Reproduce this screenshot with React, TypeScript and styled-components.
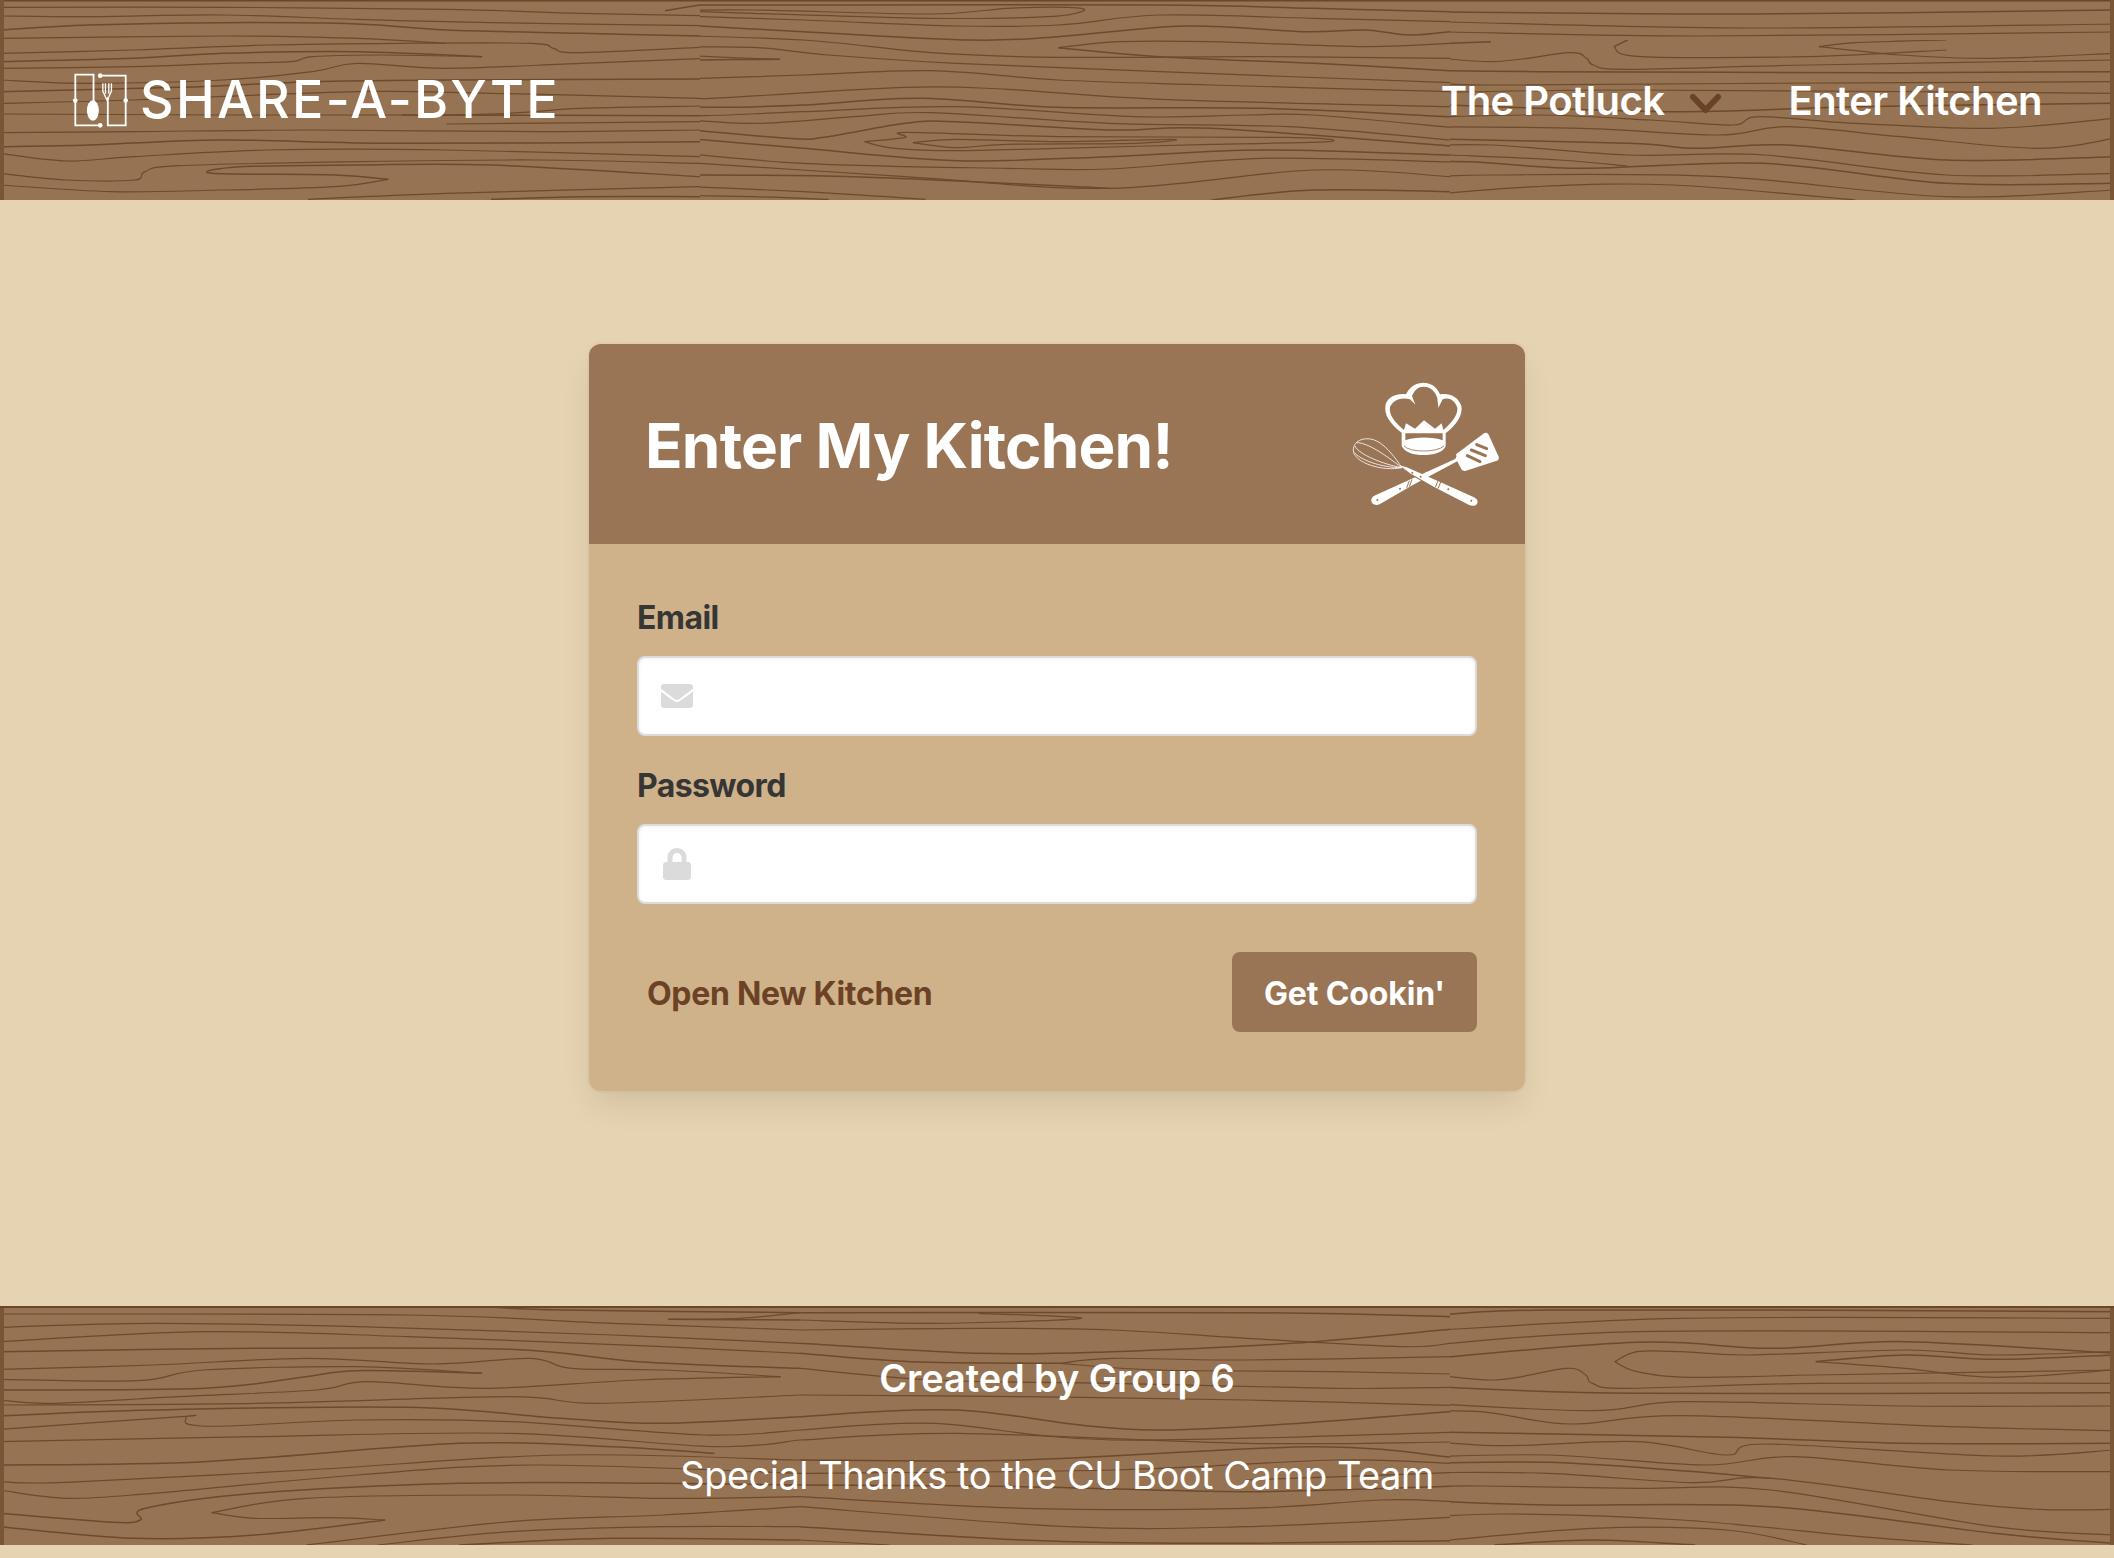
import React from 'react';
import styled, { createGlobalStyle } from 'styled-components';
import { FaEnvelope, FaLock } from 'react-icons/fa';

const GlobalStyle = createGlobalStyle`
    html, body {
        margin: 0;
        padding: 0;
        background: #e6d3b1;
        font-family: Inter, "Liberation Sans", sans-serif;
    }
    * {
        box-sizing: border-box;
    }
`;

const Page = styled.div`
    display: flex;
    flex-direction: column;
    min-height: 1558px;
`;

const WoodBar = styled.div`
    position: relative;
    background: #967353;
    color: #fff;
    overflow: hidden;
`;

const GrainSvg = styled.svg`
    position: absolute;
    inset: 0;
    width: 100%;
    height: 100%;
`;

const Content = styled.div`
    position: relative;
`;

const HeaderBar = styled(Content)`
    display: flex;
    align-items: center;
    justify-content: space-between;
    height: 200px;
    padding: 0 72px 0 72px;
`;

const Brand = styled.div`
    display: flex;
    align-items: center;
    gap: 10px;
`;

const BrandName = styled.div`
    font-size: 52px;
    font-weight: 500;
    letter-spacing: 2.3px;
    line-height: 1;
    white-space: nowrap;
`;

const Nav = styled.nav`
    display: flex;
    align-items: center;
    padding-top: 2px;
`;

const NavItem = styled.a`
    font-size: 40px;
    font-weight: 600;
    letter-spacing: -0.55px;
    line-height: 60px;
    color: #fff;
`;

const Chevron = styled.svg`
    width: 33px;
    height: 21px;
    margin: 4px 66px 0 25px;
`;

const Main = styled.main`
    flex: 1;
    display: flex;
    justify-content: center;
    padding-top: 144px;
`;

const Card = styled.section`
    width: 936px;
    height: 747px;
    background: #d0b28a;
    border-radius: 12px;
    overflow: hidden;
    box-shadow: 0 16px 32px -4px rgba(10, 10, 10, 0.1), 0 0 0 2px rgba(10, 10, 10, 0.02);
`;

const CardHead = styled.header`
    display: flex;
    align-items: center;
    justify-content: space-between;
    height: 200px;
    padding: 0 25px 0 56px;
    background: #997455;
    color: #fff;
`;

const Title = styled.h1`
    margin: 0;
    padding-top: 4px;
    font-size: 62px;
    font-weight: 700;
    letter-spacing: -0.8px;
    line-height: 1;
`;

const CardBody = styled.form`
    padding: 48px;
`;

const Field = styled.div`
    margin-bottom: 24px;
`;

const Label = styled.label`
    display: block;
    margin-bottom: 12px;
    font-size: 32px;
    font-weight: 700;
    letter-spacing: -0.6px;
    line-height: 52px;
    color: #363636;
`;

const InputWrap = styled.div`
    position: relative;
    height: 80px;
`;

const Input = styled.input`
    display: block;
    width: 100%;
    height: 80px;
    padding-left: 80px;
    background: #fff;
    border: 2px solid #dbdbdb;
    border-radius: 8px;
    box-shadow: inset 0 1px 4px rgba(10, 10, 10, 0.05);
    font-size: 32px;
`;

const IconSlot = styled.span`
    position: absolute;
    top: 0;
    left: 0;
    display: flex;
    align-items: center;
    justify-content: center;
    width: 80px;
    height: 80px;
    color: #dbdbdb;
`;

const Actions = styled.div`
    display: flex;
    align-items: center;
    justify-content: space-between;
    margin-top: 48px;
    padding-left: 10px;
`;

const SignupLink = styled.a`
    padding-top: 2px;
    font-size: 32px;
    font-weight: 700;
    letter-spacing: -0.3px;
    color: #6b4226;
`;

const Submit = styled.button`
    width: 245px;
    height: 80px;
    padding: 2px 0 0;
    background: #997455;
    border: 0;
    border-radius: 8px;
    color: #fff;
    font-family: inherit;
    font-size: 32px;
    font-weight: 700;
    letter-spacing: -0.15px;
`;

const FooterBar = styled(Content)`
    display: flex;
    flex-direction: column;
    align-items: center;
    height: 237px;
    padding-top: 40px;
    gap: 37px;
`;

const FooterLine = styled.p<{ $strong?: boolean }>`
    margin: 0;
    font-size: 38px;
    font-weight: ${(p) => (p.$strong ? 600 : 400)};
    letter-spacing: ${(p) => (p.$strong ? '-0.1px' : '-0.5px')};
    line-height: 60px;
`;

const FooterWrap = styled(WoodBar)`
    margin-bottom: 13px;
    border-top: 2px solid #6b4628;
`;

type GrainGroup = {
    x: number;
    y: number;
    w: number;
    h: number;
    view: string;
    lines: number[][];
};

const headerGrain: GrainGroup[] = [
    {
        x: 0, y: 0, w: 700, h: 220, view: '0 0 1568 660',
        lines: [
            [1490, 32, 1568, 15],
            [0, 22, 500, 22, 1000, 28, 1300, 40, 1568, 47],
            [0, 48, 200, 50, 500, 45, 800, 58, 1100, 68, 1568, 77],
            [0, 90, 200, 75, 500, 68, 800, 72, 1000, 90, 1300, 100, 1568, 108],
            [0, 115, 500, 108, 800, 115, 1000, 130],
            [0, 160, 300, 150, 600, 135, 900, 130, 1190, 130, 1240, 145, 1290, 158, 1568, 142],
            [0, 185, 300, 175, 500, 160, 800, 155, 1080, 170],
            [0, 205, 300, 200, 500, 190, 650, 185, 700, 170, 850, 165, 1080, 170],
            [0, 240, 200, 250, 500, 240, 700, 215, 800, 190, 1000, 205, 1300, 190, 1568, 176],
            [0, 275, 400, 262, 700, 245, 1000, 240, 1568, 237],
            [0, 310, 300, 300, 800, 275, 1100, 280, 1568, 295],
            [0, 342, 1000, 345, 1300, 325, 1568, 318],
            [900, 345, 1568, 347],
            [1000, 372, 1568, 365],
            [0, 398, 300, 395, 700, 390, 1200, 395, 1568, 390],
            [0, 440, 200, 435, 500, 420, 900, 430, 1568, 425],
            [0, 460, 150, 483, 300, 470, 600, 450, 1000, 450, 1568, 470],
            [0, 520, 150, 540, 300, 540, 325, 515, 400, 497, 800, 485, 1200, 480, 1568, 490],
            [870, 538, 750, 525, 475, 520, 540, 500, 800, 495, 1100, 495, 1568, 530],
            [0, 555, 250, 575, 500, 570, 750, 560, 870, 538],
            [690, 598, 1000, 580, 1568, 560],
            [1100, 598, 1300, 590, 1568, 590],
        ],
    },
    {
        x: 700, y: 0, w: 750, h: 200, view: '98 0 1470 600',
        lines: [
            [0, 15, 400, 15, 1000, 15, 1300, 25, 1568, 35],
            [35, 32, 200, 30, 550, 42, 700, 25, 820, 22, 850, 32, 780, 50, 550, 55, 200, 40, 35, 32],
            [0, 45, 300, 60, 600, 78, 800, 75, 1000, 45, 1300, 55, 1568, 65],
            [0, 70, 300, 95, 630, 120, 800, 110, 1050, 78, 1280, 95, 1400, 90, 1490, 105, 1568, 95],
            [0, 105, 300, 120, 550, 158, 800, 172, 1200, 170, 1568, 175],
            [800, 143, 920, 125, 1100, 125, 1400, 140, 1568, 130],
            [800, 143, 1000, 170, 1300, 190, 1568, 212],
            [0, 142, 200, 142, 350, 165, 600, 190, 1000, 215, 1568, 248],
            [0, 162, 150, 172, 255, 178],
            [0, 185, 100, 180, 255, 178],
            [0, 240, 300, 225, 550, 212, 800, 240, 1100, 255, 1568, 275],
            [0, 293, 120, 295, 500, 262, 700, 268, 1000, 298, 1568, 320],
            [0, 310, 120, 322, 300, 315, 530, 295, 800, 322, 1200, 325, 1568, 350],
            [0, 338, 100, 347, 300, 335, 600, 320, 950, 350, 1170, 345, 1300, 345, 1568, 382],
            [0, 350, 200, 370, 400, 350, 550, 338, 900, 370, 1250, 380, 1568, 420],
            [0, 378, 270, 415, 340, 412, 500, 370, 600, 365, 900, 390, 1100, 385, 1568, 438],
            [420, 425, 500, 412, 505, 397, 800, 410, 1250, 412, 1330, 425, 1100, 433, 800, 445, 600, 452, 480, 445, 420, 425],
            [515, 428, 600, 418, 800, 425, 1025, 418, 950, 430, 700, 433, 600, 443, 515, 428],
            [0, 405, 300, 445, 600, 482, 900, 470, 1200, 450, 1568, 465],
            [0, 450, 300, 490, 700, 505, 900, 507, 1200, 475, 1568, 486],
            [0, 480, 500, 530, 900, 565, 1300, 510, 1568, 530],
            [0, 525, 400, 530, 900, 565],
            [0, 555, 300, 575, 540, 598],
            [0, 585, 200, 590, 350, 598],
            [1100, 600, 1300, 570, 1568, 575],
        ],
    },
    {
        x: 1450, y: 0, w: 664, h: 40, view: '0 0 664 40',
        lines: [
            [0, 12, 300, 14, 664, 10],
            [0, 22, 300, 28, 664, 24],
            [0, 32, 250, 36, 664, 32],
        ],
    },
    {
        x: 1450, y: 40, w: 664, h: 160, view: '110 0 1458 480',
        lines: [
            [110, 10, 200, 5],
            [0, 40, 200, 65, 370, 38, 410, 55, 425, 75, 500, 88, 900, 75, 1568, 60],
            [470, 20, 530, 50, 900, 50, 1200, 30],
            [470, 20, 500, 0],
            [920, 20, 1000, 8, 1200, 0],
            [920, 20, 1100, 45, 1300, 55, 1568, 40],
            [0, 90, 300, 95, 1100, 98, 1568, 95],
            [0, 122, 200, 135, 800, 130, 1568, 125],
            [0, 160, 500, 150, 1568, 160],
            [0, 190, 600, 215, 1000, 200, 1568, 190],
            [0, 235, 300, 225, 550, 240, 730, 255, 790, 230, 1000, 250, 1300, 265, 1568, 235],
            [0, 260, 400, 265, 700, 285, 850, 260, 1100, 290, 1400, 325, 1568, 295],
            [0, 295, 500, 310, 650, 325, 850, 315, 1200, 360, 1568, 350],
            [0, 320, 200, 315, 500, 345, 800, 345, 1200, 405, 1568, 400],
            [110, 345, 350, 360, 500, 378],
            [0, 368, 150, 365, 400, 385, 800, 370, 1200, 430, 1568, 430],
            [0, 415, 200, 405, 700, 410, 1200, 470, 1568, 450],
            [0, 472, 300, 440, 600, 435, 1000, 480],
        ],
    },
];

const footerGrain: GrainGroup[] = [
    {
        x: 0, y: -18, w: 800, h: 268, view: '0 0 1568 804',
        lines: [
            [950, 50, 1100, 60, 1568, 68],
            [0, 72, 800, 75, 1200, 100, 1568, 120],
            [1310, 88, 1450, 85, 1568, 68],
            [1310, 88, 1568, 90],
            [0, 112, 300, 100, 700, 110, 1200, 135, 1568, 160],
            [0, 155, 400, 125, 800, 140, 1300, 170, 1568, 190],
            [0, 185, 500, 175, 1000, 178, 1250, 215, 1568, 235],
            [0, 238, 300, 225, 600, 205, 850, 222, 1040, 205, 1120, 235, 1300, 240, 1530, 260],
            [0, 268, 270, 272, 400, 240, 700, 230, 945, 250],
            [0, 300, 400, 295, 600, 260, 700, 242, 945, 250],
            [1530, 260, 1250, 270, 950, 295, 720, 275, 620, 300, 350, 320, 100, 340, 0, 330],
            [0, 345, 500, 340, 1000, 320, 1170, 340, 1568, 315],
            [0, 378, 300, 360, 800, 352, 1100, 385, 1300, 400, 1568, 380],
            [0, 418, 355, 380, 365, 380, 370, 403, 450, 408, 700, 390, 1000, 395, 1380, 435, 1568, 420],
            [0, 455, 500, 440, 1000, 430, 1400, 470, 1568, 450],
            [0, 525, 400, 515, 900, 460, 1200, 470, 1400, 490],
            [0, 575, 130, 577, 600, 540, 1100, 495, 1568, 510],
            [0, 600, 130, 625, 300, 610, 700, 555, 1050, 525, 1568, 550],
            [0, 670, 220, 697, 275, 690, 285, 655, 500, 610, 900, 580, 1300, 580, 1568, 585],
            [415, 668, 600, 625, 1000, 615, 1300, 625, 1568, 620],
            [415, 668, 500, 685, 650, 683, 755, 690],
            [0, 710, 260, 745, 500, 735, 755, 690],
            [600, 765, 1000, 695, 1300, 675, 1568, 650],
            [740, 765, 1000, 725, 1300, 710, 1568, 710],
            [900, 765, 1200, 745, 1568, 750],
        ],
    },
    {
        x: 800, y: -8, w: 650, h: 250, view: '0 0 1456 750',
        lines: [
            [0, 38, 1000, 38, 1456, 50],
            [0, 60, 300, 70, 630, 55, 400, 40],
            [0, 90, 400, 85, 700, 90, 1000, 115, 1350, 140, 1456, 130],
            [0, 130, 400, 160, 700, 155, 1100, 130, 1456, 88],
            [585, 190, 700, 175, 1000, 180, 1456, 170],
            [585, 190, 800, 210, 1200, 215, 1456, 222],
            [0, 160, 250, 185, 585, 190],
            [0, 205, 300, 240, 700, 250, 1200, 265, 1456, 262],
            [0, 285, 500, 290, 1000, 300, 1456, 316],
            [0, 350, 350, 330, 800, 390, 1456, 335],
            [0, 390, 300, 370, 700, 420, 1456, 397],
            [0, 420, 350, 400, 1000, 430, 1456, 426],
            [0, 480, 500, 480, 1150, 440, 1456, 471],
            [0, 520, 700, 510, 1200, 480, 1456, 490],
            [1000, 540, 1456, 518],
            [0, 555, 500, 560, 1000, 575, 1456, 559],
            [0, 590, 500, 625, 1000, 625, 1300, 600, 1456, 604],
            [0, 620, 600, 680, 1000, 680, 1456, 652],
            [0, 680, 500, 720, 900, 730, 1456, 722],
            [0, 720, 200, 735],
        ],
    },
    {
        x: 1450, y: -8, w: 664, h: 258, view: '81 0 1487 774',
        lines: [
            [0, 60, 300, 30, 1568, 35],
            [0, 95, 600, 55, 1568, 55],
            [0, 140, 500, 95, 1568, 98],
            [0, 180, 500, 127, 800, 145, 1100, 125, 1568, 160],
            [450, 185, 500, 155, 600, 155, 750, 165, 1100, 150, 1300, 165, 1568, 155],
            [450, 185, 500, 215, 620, 232, 900, 225, 1568, 210],
            [900, 185, 1100, 165, 1300, 178, 1568, 165],
            [900, 185, 1100, 205, 1300, 232, 1568, 210],
            [0, 215, 180, 240, 340, 205, 385, 225, 400, 250, 480, 265, 900, 250, 1568, 250],
            [0, 258, 500, 280, 1568, 278],
            [0, 308, 400, 332, 600, 305, 1100, 318, 1568, 318],
            [0, 335, 150, 335, 350, 372, 600, 347, 1200, 380, 1568, 392],
            [0, 395, 700, 412, 1100, 430, 1568, 430],
            [0, 420, 200, 437, 500, 425, 700, 465, 790, 432, 1300, 468, 1568, 450],
            [0, 472, 300, 465, 650, 495, 850, 470, 1200, 510, 1568, 515],
            [0, 490, 300, 487, 600, 512, 800, 535],
            [0, 518, 300, 520, 620, 548, 800, 535, 1200, 605, 1400, 628, 1568, 628],
            [0, 560, 150, 558, 500, 565, 800, 570, 1300, 680, 1568, 705],
            [0, 600, 300, 615, 800, 620, 1300, 700, 1568, 730],
            [0, 655, 200, 642, 600, 660, 1000, 710, 1250, 735],
            [0, 730, 400, 685, 700, 690, 880, 735],
            [180, 735, 400, 720, 630, 735],
        ],
    },
];

// catmull-rom through the traced points
function smoothPath(pts: number[]) {
    const p: [number, number][] = [];
    for (let i = 0; i < pts.length; i += 2) p.push([pts[i], pts[i + 1]]);
    let d = `M${p[0][0]} ${p[0][1]}`;
    for (let i = 0; i < p.length - 1; i++) {
        const a = p[Math.max(i - 1, 0)];
        const b = p[i];
        const c = p[i + 1];
        const e = p[Math.min(i + 2, p.length - 1)];
        const c1x = b[0] + (c[0] - a[0]) / 6;
        const c1y = b[1] + (c[1] - a[1]) / 6;
        const c2x = c[0] - (e[0] - b[0]) / 6;
        const c2y = c[1] - (e[1] - b[1]) / 6;
        d += ` C${c1x} ${c1y} ${c2x} ${c2y} ${c[0]} ${c[1]}`;
    }
    return d;
}

function WoodGrain({ groups, height, topEdge }: { groups: GrainGroup[]; height: number; topEdge?: boolean }) {
    return (
        <GrainSvg viewBox={`0 0 2114 ${height}`} preserveAspectRatio="none" aria-hidden="true">
            {groups.map((g, i) => (
                <svg key={i} x={g.x} y={g.y} width={g.w} height={g.h} viewBox={g.view} preserveAspectRatio="none">
                    {g.lines.map((l, j) => (
                        <path
                            key={j}
                            d={smoothPath(l)}
                            fill="none"
                            stroke="#6e4a2c"
                            strokeWidth={j % 3 === 0 ? 1.5 : 1.2}
                            vectorEffect="non-scaling-stroke"
                        />
                    ))}
                </svg>
            ))}
            {topEdge && <rect x="0" y="0" width="2114" height="1.5" fill="#6b4628" />}
            <rect x="0" y="0" width="4" height={height} fill="#7a5636" />
            <rect x="2110" y="0" width="4" height={height} fill="#7a5636" />
        </GrainSvg>
    );
}

function LogoMark() {
    return (
        <svg width="58" height="57" viewBox="35 35 175 170" fill="none" stroke="#fff" strokeWidth="5.5">
            <path d="M45 120V42H100V125" />
            <path d="M45 120V195H120" />
            <path d="M120 45H197V195H143V110" />
            <circle cx="45" cy="120" r="7" fill="#fff" stroke="none" />
            <circle cx="120" cy="195" r="7" fill="#fff" stroke="none" />
            <circle cx="120" cy="45" r="7" fill="#fff" stroke="none" />
            <circle cx="197" cy="120" r="7" fill="#fff" stroke="none" />
            <ellipse cx="98" cy="150" rx="18" ry="31" fill="#fff" stroke="none" />
            <path d="M128 68V92L141 120L154 92V68M136 68V100M146 68V100" strokeWidth="4" />
        </svg>
    );
}

function ChefMark() {
    const brown = '#997455';
    return (
        <svg width="150" height="127" viewBox="150 125 450 381">
            {/* hat */}
            <path
                fill="#fff"
                d="M305 320V280C270 255 250 225 257 195C265 170 295 160 318 165C330 140 350 130 370 130C395 130 412 145 420 165C445 160 475 170 484 200C490 230 465 260 437 282V320C430 340 400 347 370 347C340 347 315 340 305 320Z"
            />
            <path
                fill={brown}
                d="M312 272C285 250 265 225 270 203C278 183 305 172 330 180L346 196L336 170C345 150 355 142 370 142C392 142 405 155 412 176L415 205L428 180C445 172 465 182 472 205C475 228 450 255 430 272L425 252L405 268L372 243L345 268L318 252Z"
            />
            <path fill={brown} d="M316 282H428V303C400 292 345 292 316 303Z" />
            <path fill="none" stroke={brown} strokeWidth="2.5" d="M312 320C330 340 410 340 432 320" />
            {/* spatula */}
            <path
                fill="#fff"
                d="M468 345L550 283C556 279 562 280 566 286L596 352C598 358 596 362 590 364L498 394C492 396 488 394 484 390L472 366L340 436L240 494C228 500 216 496 214 486C212 478 218 472 226 468L322 424L464 360C470 356 470 350 468 345Z"
            />
            <path
                stroke={brown}
                strokeWidth="9"
                strokeLinecap="round"
                d="M530 316L560 328M514 332L556 349M502 349L540 367"
            />
            {/* whisk wires */}
            <g fill="none" stroke="#fff" strokeWidth="2.4">
                <path d="M305 385C250 397 165 372 160 335C158 300 200 290 230 305C260 320 290 360 305 385Z" />
                <path d="M305 385C250 375 175 345 165 320" />
                <path d="M305 385C260 350 205 310 170 310" />
                <path d="M305 385C240 385 180 360 163 340" />
            </g>
            {/* whisk handle */}
            <path fill="none" stroke={brown} strokeWidth="7" d="M322 398L400 440" />
            <path
                fill="#fff"
                d="M298 378L320 384L412 424L522 474C534 480 536 490 528 497C522 501 514 500 506 496L404 444L330 402Z"
            />
            <path stroke={brown} strokeWidth="3" d="M414 424L406 444M422 428L414 448M328 424L320 446M336 420L328 442" />
            <g fill={brown}>
                <circle cx="337" cy="400" r="3" />
                <circle cx="362" cy="412" r="3" />
                <circle cx="445" cy="450" r="3" />
                <circle cx="514" cy="484" r="3" />
                <circle cx="232" cy="482" r="3" />
                <circle cx="300" cy="448" r="3" />
            </g>
        </svg>
    );
}

export default function App() {
    return (
        <Page>
            <GlobalStyle />
            <WoodBar>
                <WoodGrain groups={headerGrain} height={200} topEdge />
                <HeaderBar>
                    <Brand>
                        <LogoMark />
                        <BrandName>SHARE-A-BYTE</BrandName>
                    </Brand>
                    <Nav>
                        <NavItem>The Potluck</NavItem>
                        <Chevron viewBox="0 0 33 21" fill="none" stroke="#6b4226" strokeWidth="6" strokeLinecap="round" strokeLinejoin="round">
                            <path d="M4 4L16.5 17L29 4" />
                        </Chevron>
                        <NavItem>Enter Kitchen</NavItem>
                    </Nav>
                </HeaderBar>
            </WoodBar>
            <Main>
                <Card>
                    <CardHead>
                        <Title>Enter My Kitchen!</Title>
                        <ChefMark />
                    </CardHead>
                    <CardBody>
                        <Field>
                            <Label>Email</Label>
                            <InputWrap>
                                <Input type="email" />
                                <IconSlot><FaEnvelope size={32} /></IconSlot>
                            </InputWrap>
                        </Field>
                        <Field>
                            <Label>Password</Label>
                            <InputWrap>
                                <Input type="password" />
                                <IconSlot><FaLock size={32} /></IconSlot>
                            </InputWrap>
                        </Field>
                        <Actions>
                            <SignupLink>Open New Kitchen</SignupLink>
                            <Submit type="button">Get Cookin'</Submit>
                        </Actions>
                    </CardBody>
                </Card>
            </Main>
            <FooterWrap>
                <WoodGrain groups={footerGrain} height={237} />
                <FooterBar>
                    <FooterLine $strong>Created by Group 6</FooterLine>
                    <FooterLine>Special Thanks to the CU Boot Camp Team</FooterLine>
                </FooterBar>
            </FooterWrap>
        </Page>
    );
}
